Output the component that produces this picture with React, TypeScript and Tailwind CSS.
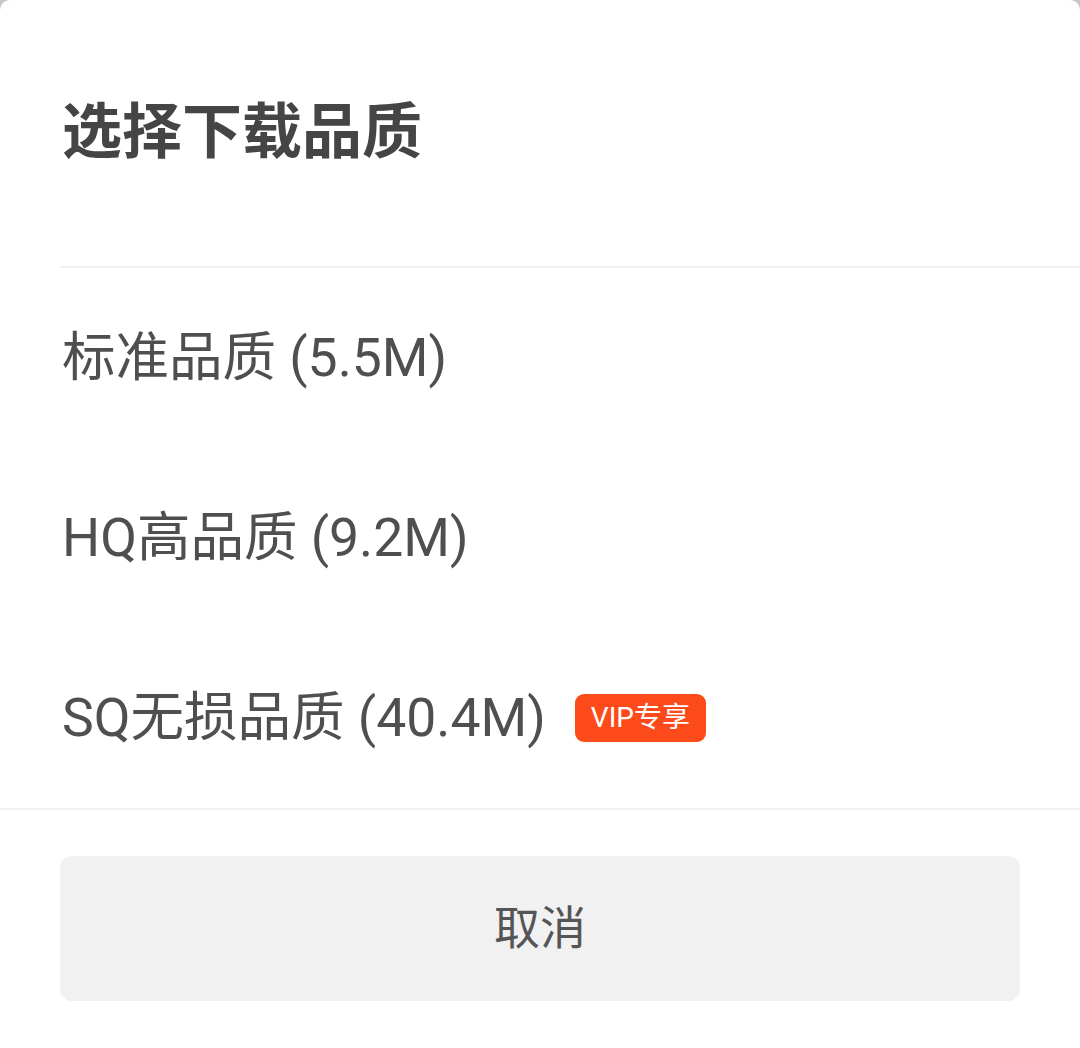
import React from "react";

const options = [
  { label: "标准品质 (5.5M)", vip: false },
  { label: "HQ高品质 (9.2M)", vip: false },
  { label: "SQ无损品质 (40.4M)", vip: true },
];

export default function App() {
  return (
    <div className="w-[1080px] h-[1048px] bg-[#c8c8c8] overflow-hidden" style={{ fontFamily: "Roboto, 'Noto Sans CJK SC', sans-serif" }}>
      <div className="h-full bg-white rounded-t-[10px] flex flex-col">
        <div className="h-[266px] flex items-center pl-[62px]">
          <h2 className="text-[60px] font-bold text-[#454545] leading-none">选择下载品质</h2>
        </div>
        <div className="ml-[60px] border-t-2 border-[#f0f0f0]">
          {options.map((o) => (
            <div key={o.label} className="h-[180px] flex items-center pl-[2px] text-[#4f4f4f]">
              <span className="text-[53.5px] leading-none">{o.label}</span>
              {o.vip && (
                <span className="ml-[29px] h-[48px] px-[16px] flex items-center bg-[#fd4a1a] text-white text-[28px] rounded-[9px] leading-none">
                  VIP专享
                </span>
              )}
            </div>
          ))}
        </div>
        <div className="border-t-2 border-[#f0f0f0] px-[60px] pt-[46px]">
          <button className="w-[960px] h-[145px] bg-[#f1f1f1] rounded-[12px] text-[46px] text-[#555] flex items-center justify-center">
            取消
          </button>
        </div>
      </div>
    </div>
  );
}
